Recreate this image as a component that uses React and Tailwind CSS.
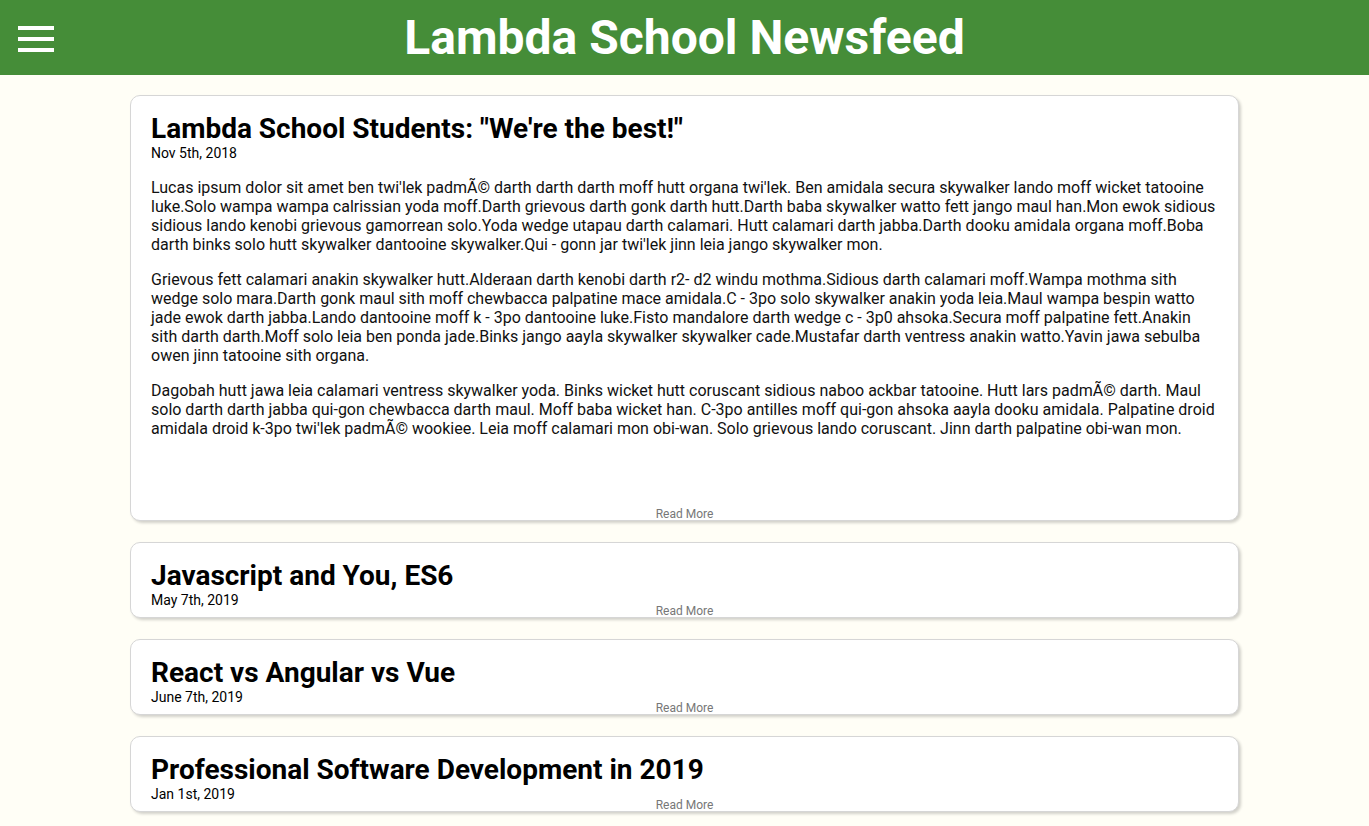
import React from 'react';

const articles = [
  {
    title: 'Lambda School Students: "We\'re the best!"',
    date: 'Nov 5th, 2018',
    open: true,
    paragraphs: [
      "Lucas ipsum dolor sit amet ben twi'lek padmÃ© darth darth darth moff hutt organa twi'lek. Ben amidala secura skywalker lando moff wicket tatooine luke.Solo wampa wampa calrissian yoda moff.Darth grievous darth gonk darth hutt.Darth baba skywalker watto fett jango maul han.Mon ewok sidious sidious lando kenobi grievous gamorrean solo.Yoda wedge utapau darth calamari. Hutt calamari darth jabba.Darth dooku amidala organa moff.Boba darth binks solo hutt skywalker dantooine skywalker.Qui - gonn jar twi'lek jinn leia jango skywalker mon.",
      'Grievous fett calamari anakin skywalker hutt.Alderaan darth kenobi darth r2- d2 windu mothma.Sidious darth calamari moff.Wampa mothma sith wedge solo mara.Darth gonk maul sith moff chewbacca palpatine mace amidala.C - 3po solo skywalker anakin yoda leia.Maul wampa bespin watto jade ewok darth jabba.Lando dantooine moff k - 3po dantooine luke.Fisto mandalore darth wedge c - 3p0 ahsoka.Secura moff palpatine fett.Anakin sith darth darth.Moff solo leia ben ponda jade.Binks jango aayla skywalker skywalker cade.Mustafar darth ventress anakin watto.Yavin jawa sebulba owen jinn tatooine sith organa.',
      "Dagobah hutt jawa leia calamari ventress skywalker yoda. Binks wicket hutt coruscant sidious naboo ackbar tatooine. Hutt lars padmÃ© darth. Maul solo darth darth jabba qui-gon chewbacca darth maul. Moff baba wicket han. C-3po antilles moff qui-gon ahsoka aayla dooku amidala. Palpatine droid amidala droid k-3po twi'lek padmÃ© wookiee. Leia moff calamari mon obi-wan. Solo grievous lando coruscant. Jinn darth palpatine obi-wan mon.",
    ],
  },
  { title: 'Javascript and You, ES6', date: 'May 7th, 2019', paragraphs: [] },
  { title: 'React vs Angular vs Vue', date: 'June 7th, 2019', paragraphs: [] },
  { title: 'Professional Software Development in 2019', date: 'Jan 1st, 2019', paragraphs: [] },
];

const Article = ({ article }) => (
  <div
    className={`relative bg-white border border-[#d6d6d6] rounded-[10px] shadow-[2px_2px_3px_rgba(0,0,0,0.18)] px-5 pt-[17px] ${
      article.open ? 'h-[426px]' : 'h-[76px]'
    }`}
  >
    <h2 className="text-[28px] font-bold leading-[32px] text-black">{article.title}</h2>
    <p className="text-[14px] leading-[16px] text-black">{article.date}</p>
    {article.open && (
      <div className="mt-[17px] flex flex-col gap-4">
        {article.paragraphs.map((text, i) => (
          <p key={i} className="text-base leading-[19px] text-[#111]">
            {text}
          </p>
        ))}
      </div>
    )}
    <span className="absolute bottom-[-1px] left-0 right-0 text-center text-xs leading-[14px] text-[#777]">
      Read More
    </span>
  </div>
);

const App = () => {
  return (
    <div className="min-h-screen bg-[#fffef6]" style={{ fontFamily: 'Roboto, sans-serif' }}>
      <header className="relative h-[75px] bg-[#458d38] flex items-center justify-center">
        <button className="absolute left-[18px] top-[26px] flex flex-col gap-[7px]">
          <span className="block w-[36px] h-1 bg-white" />
          <span className="block w-[36px] h-1 bg-white" />
          <span className="block w-[36px] h-1 bg-white" />
        </button>
        <h1 className="text-[48px] font-bold text-white leading-none">Lambda School Newsfeed</h1>
      </header>

      <main className="w-[1109px] mx-auto pt-5 flex flex-col gap-[21px] pb-6">
        {articles.map((article, i) => (
          <Article key={i} article={article} />
        ))}
      </main>
    </div>
  );
};

export default App;
